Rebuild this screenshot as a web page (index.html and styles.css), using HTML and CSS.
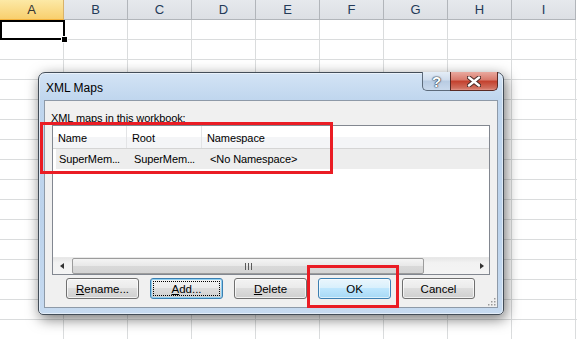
FILE: index.html
```html
<!DOCTYPE html>
<html lang="en">
<head>
  <meta charset="UTF-8" />
  <title>XML Maps</title>
  <link rel="stylesheet" href="styles.css">
</head>
<body>

  <!-- Hoja de cálculo -->
  <div class="sheet">
    <div class="col-heads">
      <div class="col-head active">A</div>
      <div class="col-head">B</div>
      <div class="col-head">C</div>
      <div class="col-head">D</div>
      <div class="col-head">E</div>
      <div class="col-head">F</div>
      <div class="col-head">G</div>
      <div class="col-head">H</div>
      <div class="col-head">I</div>
    </div>
    <div class="cells"></div>
    <div class="cell-cursor"><span class="fill-handle"></span></div>
  </div>

  <!-- Diálogo -->
  <div class="dialog">
    <div class="titlebar">
      <span class="title">XML Maps</span>
      <div class="caption-buttons">
        <span class="cap-btn help">?</span>
        <span class="cap-btn close">
          <svg width="14" height="11" viewBox="0 0 14 11">
            <path d="M2 1.5 L12 9.5 M12 1.5 L2 9.5" stroke="#4a2a26" stroke-width="4.4" stroke-linecap="round"/>
            <path d="M2 1.5 L12 9.5 M12 1.5 L2 9.5" stroke="#fff" stroke-width="2.4" stroke-linecap="round"/>
          </svg>
        </span>
      </div>
    </div>

    <div class="client">
      <div class="label">XML <u>m</u>aps in this workbook:</div>

      <div class="listview">
        <div class="lv-head">
          <div class="lv-col c1">Name</div>
          <div class="lv-col c2">Root</div>
          <div class="lv-col c3">Namespace</div>
        </div>
        <div class="lv-row">
          <div class="lv-cell c1">SuperMem<span class="dots">...</span></div>
          <div class="lv-cell c2">SuperMem<span class="dots">...</span></div>
          <div class="lv-cell c3">&lt;No Namespace&gt;</div>
        </div>
        <div class="lv-empty"></div>
        <div class="hscroll">
          <div class="arrow left"></div>
          <div class="thumb"><span class="grip"></span></div>
          <div class="track"></div>
          <div class="arrow right"></div>
        </div>
      </div>

      <div class="buttons">
        <button class="btn"><u>R</u>ename...</button>
        <button class="btn focus"><span class="focus-rect"><u>A</u>dd...</span></button>
        <button class="btn"><u>D</u>elete</button>
        <button class="btn default">OK</button>
        <button class="btn">Cancel</button>
      </div>

      <svg class="gripper" width="10" height="10" viewBox="0 0 10 10">
        <g fill="#9a9a9a">
          <rect x="8" y="2" width="1.5" height="1.5"/>
          <rect x="5" y="5" width="1.5" height="1.5"/>
          <rect x="8" y="5" width="1.5" height="1.5"/>
          <rect x="2" y="8" width="1.5" height="1.5"/>
          <rect x="5" y="8" width="1.5" height="1.5"/>
          <rect x="8" y="8" width="1.5" height="1.5"/>
        </g>
      </svg>
    </div>
  </div>

  <!-- Marcas rojas -->
  <div class="mark mark-list"></div>
  <div class="mark mark-ok"></div>

</body>
</html>
```

FILE: styles.css
```css
body {
  margin: 0;
  padding: 0;
  width: 577px;
  height: 339px;
  overflow: hidden;
  background: #fff;
  font-family: "Liberation Sans", Arial, sans-serif;
  font-size: 12px;
  position: relative;
}

/* Hoja */
.sheet {
  position: relative;
  width: 577px;
  height: 339px;
}

.col-heads {
  display: flex;
  height: 20px;
}

.col-head {
  width: 63px;
  flex: none;
  height: 19px;
  line-height: 20px;
  text-align: center;
  color: #233a58;
  font-size: 13px;
  background: linear-gradient(#e6e9ed, #dcdfe4);
  border-right: 1px solid #b1b5ba;
  border-bottom: 1px solid #b1b5ba;
}

.col-head.active {
  background: linear-gradient(#fce9a6, #f8cf6e);
  border-bottom-color: #f2b13c;
  border-right-color: #d8b26a;
  color: #333;
}

.cells {
  height: 319px;
  background:
    repeating-linear-gradient(to bottom, transparent 0 19px, #dadcdd 19px 20px),
    repeating-linear-gradient(to right, transparent 0 63px, #dadcdd 63px 64px);
}

.cell-cursor {
  position: absolute;
  left: 0;
  top: 20px;
  width: 61px;
  height: 16px;
  border: 2px solid #000;
}

.fill-handle {
  position: absolute;
  right: -5px;
  bottom: -5px;
  width: 5px;
  height: 5px;
  background: #000;
  border: 1px solid #fff;
}

/* Diálogo */
.dialog {
  position: absolute;
  left: 38px;
  top: 72px;
  width: 466px;
  height: 243px;
  box-sizing: border-box;
  border: 1px solid #434d58;
  border-radius: 7px 7px 5px 5px;
  background: linear-gradient(#d3e3f5, #c0d6ee 26px, #bcd3ec 60%, #c6daf0);
  box-shadow: 0 0 0 1px rgba(255, 255, 255, 0.5) inset, 2px 4px 14px rgba(0, 0, 0, 0.55);
  padding: 0 5px 6px 5px;
  display: flex;
  flex-direction: column;
}

.titlebar {
  height: 27px;
  display: flex;
  align-items: flex-start;
  flex: none;
}

.title {
  padding: 8px 0 0 2px;
  line-height: 15px;
  color: #000;
}

.caption-buttons {
  margin-left: auto;
  display: flex;
  margin-top: -1px;
}

.cap-btn {
  height: 18px;
  border: 1px solid #5d6b7b;
  border-top: none;
  display: flex;
  align-items: center;
  justify-content: center;
}

.cap-btn.help {
  width: 27px;
  border-radius: 0 0 0 5px;
  border-right: none;
  background: linear-gradient(#e4edf7, #cfdcec 45%, #b8cbe2 50%, #c9d9ec);
  color: #fff;
  font-weight: bold;
  font-size: 15px;
  text-shadow: 0 0 1px #2c3a4a, 0 0 1px #2c3a4a, 0 0 2px #2c3a4a;
}

.cap-btn.close {
  width: 46px;
  border-radius: 0 0 5px 0;
  border-color: #5a2a24;
  background: linear-gradient(#e9a99f, #d8796b 45%, #c33f2c 50%, #d0705f 90%, #e2968a);
}

.client {
  flex: 1;
  position: relative;
  background: #f0f0f0;
  border: 1px solid #8e9aa8;
  font-size: 11px;
  letter-spacing: -0.1px;
}

.label {
  padding: 10px 6px 0;
  line-height: 14px;
  color: #000;
}

.listview {
  margin: 0 0 0 7px;
  width: 436px;
  height: 148px;
  border: 1px solid #828790;
  background: #fff;
  display: flex;
  flex-direction: column;
}

.lv-head {
  display: flex;
  height: 22px;
  border-bottom: 1px solid #d5d5d5;
  background: linear-gradient(#fff 0 50%, #f4f5f7 50% 100%);
  flex: none;
}

.lv-col {
  line-height: 24px;
  padding-left: 5px;
  color: #000;
  box-sizing: border-box;
}

.lv-col.c1 { width: 74px; border-right: 1px solid #e3e4e6; }
.lv-col.c2 { width: 75px; border-right: 1px solid #e3e4e6; }
.lv-col.c3 { flex: 1; }

.lv-row {
  display: flex;
  height: 20px;
  margin: 0 0 0 3px;
  background: #ededed;
  flex: none;
}

.lv-cell {
  line-height: 21px;
  box-sizing: border-box;
  white-space: nowrap;
  color: #000;
}

.dots {
  letter-spacing: -0.5px;
}

.lv-cell.c1 { width: 71px; padding-left: 3px; }
.lv-cell.c2 { width: 75px; padding-left: 7px; }
.lv-cell.c3 { flex: 1; padding-left: 8px; }

.lv-empty {
  flex: 1;
}

.hscroll {
  height: 17px;
  display: flex;
  align-items: center;
  background: linear-gradient(#e6e6e6, #f2f2f2 30%, #f4f4f4);
  border-top: 1px solid #e9e9e9;
  box-sizing: border-box;
  flex: none;
}

.arrow {
  width: 17px;
  height: 17px;
  flex: none;
  position: relative;
}

.arrow::after {
  content: "";
  position: absolute;
  top: 5px;
  border-top: 3.5px solid transparent;
  border-bottom: 3.5px solid transparent;
}

.arrow.left::after {
  left: 7px;
  border-right: 4px solid #333;
}

.arrow.right::after {
  left: 8px;
  border-left: 4px solid #333;
}

.thumb {
  margin-left: 2px;
  width: 350px;
  height: 14px;
  border: 1px solid #9c9c9c;
  border-radius: 2px;
  background: linear-gradient(#f4f4f4, #e8e8e8 50%, #d9d9d9 51%, #d4d4d4);
  display: flex;
  align-items: center;
  justify-content: center;
}

.grip {
  width: 7px;
  height: 7px;
  background: repeating-linear-gradient(to right, #5a5a5a 0 1px, transparent 1px 3px);
}

.track {
  flex: 1;
}

.buttons {
  display: flex;
  gap: 11px;
  padding: 3px 0 0 21px;
}

.btn {
  width: 73px;
  height: 21px;
  padding: 0;
  border: 1px solid #707070;
  border-radius: 3px;
  background: linear-gradient(#f3f3f3, #ebebeb 45%, #dddddd 50%, #cfcfcf);
  box-shadow: inset 0 0 0 1px rgba(255, 255, 255, 0.7);
  font-family: "Liberation Sans", Arial, sans-serif;
  font-size: 11.5px;
  color: #000;
}

.btn.focus {
  border-color: #3c7fb1;
  box-shadow: inset 0 0 0 1px #8fd0f2;
  display: flex;
  align-items: stretch;
  padding: 2px;
}

.focus-rect {
  flex: 1;
  border: 1px dotted #000;
  display: flex;
  align-items: center;
  justify-content: center;
}

.btn.default {
  border-color: #3c7fb1;
  background: linear-gradient(#eaf6fd, #d9f0fc 45%, #bee6fd 50%, #a7d9f5);
  box-shadow: inset 0 0 0 1px rgba(255, 255, 255, 0.6);
}

.gripper {
  position: absolute;
  right: 1px;
  bottom: 1px;
}

/* Marcas rojas */
.mark {
  position: absolute;
  border: 3px solid #ea1c24;
  box-sizing: border-box;
}

.mark-list {
  left: 40px;
  top: 122px;
  width: 293px;
  height: 52px;
}

.mark-ok {
  left: 307px;
  top: 265px;
  width: 92px;
  height: 43px;
}
```
